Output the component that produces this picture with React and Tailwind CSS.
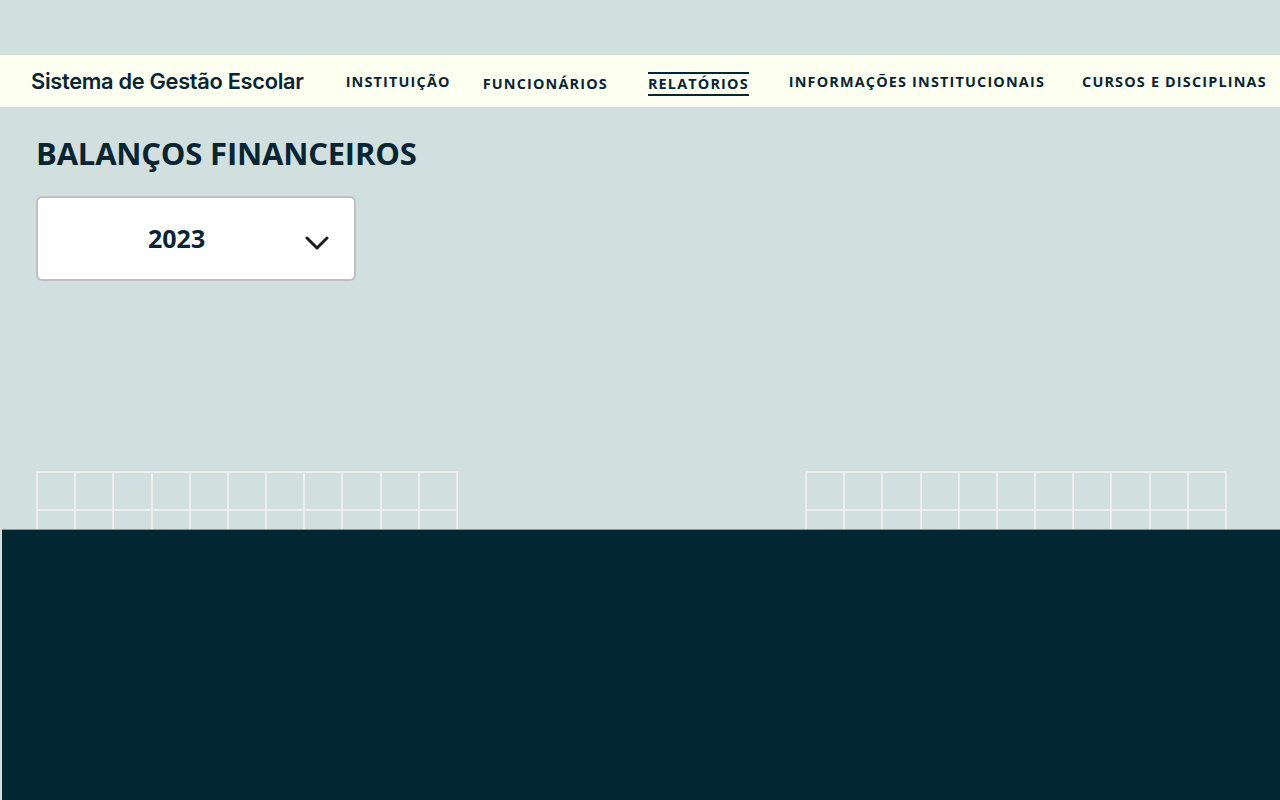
const navItems = [
  { label: 'Instituição', cls: 'ml-[42px] mt-[1px]' },
  { label: 'Funcionários', cls: 'ml-[32px] mt-[5px]' },
  { label: 'Relatórios', cls: 'ml-[40px] mt-[5px] border-y-2 border-[#032633] leading-[20px]' },
  { label: 'Informações Institucionais', cls: 'ml-[40px] mt-[1px]' },
  { label: 'Cursos e Disciplinas', cls: 'ml-[37px] mt-[1px]' }
];

function Grid() {
  const cells = Array.from({ length: 22 });
  return (
    <div className="grid h-[58px] w-[422px] grid-cols-11 gap-[2px] overflow-hidden bg-[#ededed] p-[2px] pb-0">
      {cells.map((_, i) => (
        <div key={i} className="h-[36px] bg-[#d1dfdf]" />
      ))}
    </div>
  );
}

export default function App() {
  return (
    <div className="flex min-h-[800px] flex-col bg-[#d1dfdf] font-['Open_Sans',sans-serif] text-[#082533]">
      <div className="h-[55px]" />
      <header className="flex h-[52px] items-center bg-[#fdfff1] pl-[31px]">
        <span className="font-['Inter',sans-serif] text-[21.8px] font-semibold tracking-[-0.3px] text-[#082533]">
          Sistema de Gestão Escolar
        </span>
        {navItems.map((item) => (
          <span key={item.label} className={`text-[14.4px] font-bold uppercase tracking-[1.18px] ${item.cls}`}>
            {item.label}
          </span>
        ))}
      </header>
      <main className="px-[36px] pt-[26px]">
        <h1 className="text-[31px] font-bold leading-[40px] tracking-[-0.2px]">BALANÇOS FINANCEIROS</h1>
        <div className="mt-[23px] flex h-[85px] w-[320px] items-center rounded-[6px] border-2 border-[#c0c0c0] bg-white">
          <span className="ml-[110px] text-[25px] font-bold">2023</span>
          <svg className="ml-[100px] mt-[9px]" width="24" height="14" viewBox="0 0 24 14" fill="none">
            <path d="M2 2 L12 12 L22 2" stroke="#1b1b1b" strokeWidth="3" strokeLinecap="round" strokeLinejoin="round" />
          </svg>
        </div>
        <div className="mt-[190px] flex justify-between pr-[17px]">
          <Grid />
          <Grid />
        </div>
      </main>
      <section className="ml-[2px] flex-1 border-t border-[#7f9aa0] bg-[#032633]" />
    </div>
  );
}
